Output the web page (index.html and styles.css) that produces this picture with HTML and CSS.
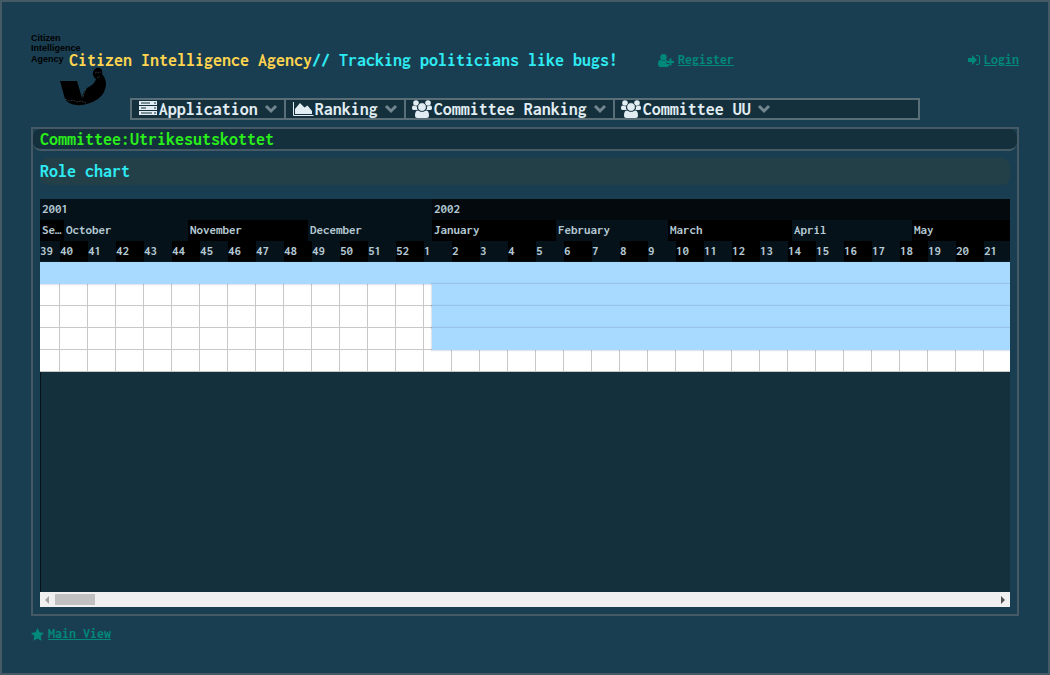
FILE: index.html
```html
<!DOCTYPE html>
<html lang="en">
<head>
<meta charset="utf-8">
<meta name="viewport" content="width=device-width, initial-scale=1">
<title>Citizen Intelligence Agency</title>
<link rel="stylesheet" href="styles.css">
</head>
<body class="page">
<svg class="sprite" aria-hidden="true">
  <symbol id="chevron" viewBox="0 0 14 10"><path d="M2 2l5 5 5-5" fill="none" stroke="currentColor" stroke-width="3"/></symbol>
  <symbol id="group" viewBox="0 0 20 18">
    <circle cx="4" cy="3" r="2.8"/><circle cx="16" cy="3" r="2.8"/>
    <path d="M0 8.5Q0 5.500 1.500 5.500L5 6.500Q4.500 9 6 10H2Q0 10 0 8.500zM20 8.500Q20 5.500 18.500 5.500L15 6.500Q15.500 9 14 10H18Q20 10 20 8.500z"/>
    <path d="M3 15.500Q3 10.500 6 10.500Q10 13 14 10.500Q17 10.500 17 15.500Q17 18 14.500 18H5.500Q3 18 3 15.500z"/>
    <circle cx="10" cy="7" r="4.300" stroke="#14303d" stroke-width=".7"/>
  </symbol>
</svg>
<header class="header">
  <svg class="logo" viewBox="0 0 80 75" role="img" aria-label="Citizen Intelligence Agency logo">
    <text x="0" y="8">Citizen</text><text x="0" y="18">Intelligence</text><text x="0" y="29">Agency</text>
    <path d="M29 48H46L51 65Q52 59 56 55Q64 51 65 46Q61 43 62 39Q64 34 69 35Q72 37 71 41Q75 45 75 52Q74 61 67 66Q56 73 45 72Q37 71 34 66z"/>
    <path d="M64 40l2-1 1 1 3-1M66 45l3-2M34 66l5 2 3-1 4 2 4-1 5 2M55 56l-2 4-1 5" fill="none" stroke="#4f575b" stroke-width=".6" stroke-dasharray="2 1"/>
  </svg>
  <h1 class="title"><span class="name">Citizen Intelligence Agency</span>// Tracking politicians like bugs!</h1>
  <a class="link" href="#register"><svg width="16" height="13" viewBox="0 0 16 13" aria-hidden="true"><circle cx="5.500" cy="3.200" r="3.200"/><path d="M0 10Q0 6 2.500 5.800Q5.500 8 8.500 5.800Q9.500 6 9.500 7.500H8.500V10H11V12Q10 13 9 13H2.500Q0 13 0 10z"/><path d="M9 8h7M12.500 4.500v7" stroke="currentColor" stroke-width="2"/></svg><span class="label">Register</span></a>
  <a class="link login" href="#login"><svg width="12" height="12" viewBox="0 0 12 12" aria-hidden="true"><path d="M0 4h4V1l5 5-5 5V8H0z"/><path d="M8 1.500h2Q11.500 1.500 11.500 3v6Q11.500 10.500 10 10.500H8" fill="none" stroke="currentColor"/></svg><span class="label">Login</span></a>
</header>
<nav class="menu" aria-label="Main">
  <button class="item" type="button"><svg class="icon" width="21" height="18" viewBox="0 0 21 18" aria-hidden="true"><path d="M1 1h18v4H1zM1 6h18v4H1zM1 11h18v4H1z"/><path d="M3 3h9M3 8h5M3 13h11" stroke="#14303d"/><path d="M16 3h2M16 8h2M16 13h2" stroke="#14303d"/></svg>Application<svg class="chevron" width="14" height="10"><use href="#chevron"/></svg></button>
  <button class="item" type="button"><svg class="icon" width="23" height="18" viewBox="0 0 23 18" aria-hidden="true"><path d="M1.500 2v13.500h20" fill="none" stroke="currentColor"/><path d="M3 14V9L8 3 12.500 7.500 15.500 5.500 20 11V14z"/></svg>Ranking<svg class="chevron" width="14" height="10"><use href="#chevron"/></svg></button>
  <button class="item" type="button"><svg class="icon group" width="20" height="18"><use href="#group"/></svg>Committee Ranking<svg class="chevron" width="14" height="10"><use href="#chevron"/></svg></button>
  <button class="item" type="button"><svg class="icon group" width="20" height="18"><use href="#group"/></svg>Committee UU<svg class="chevron" width="14" height="10"><use href="#chevron"/></svg></button>
</nav>
<main class="panel">
  <h2 class="caption">Committee:Utrikesutskottet</h2>
  <section class="content">
    <h3 class="subtitle">Role chart</h3>
    <div class="chart">
      <div class="scale years"><span style="--days:98">2001</span><span style="--days:365">2002</span></div>
      <div class="scale months"><span style="--days:6">Se…</span><span style="--days:31">October</span><span style="--days:30">November</span><span style="--days:31">December</span><span style="--days:31">January</span><span style="--days:28">February</span><span style="--days:31">March</span><span style="--days:30">April</span><span style="--days:31">May</span></div>
      <div class="scale weeks"><span style="--days:5">39</span><span>40</span><span>41</span><span>42</span><span>43</span><span>44</span><span>45</span><span>46</span><span>47</span><span>48</span><span>49</span><span>50</span><span>51</span><span>52</span><span>1</span><span>2</span><span>3</span><span>4</span><span>5</span><span>6</span><span>7</span><span>8</span><span>9</span><span>10</span><span>11</span><span>12</span><span>13</span><span>14</span><span>15</span><span>16</span><span>17</span><span>18</span><span>19</span><span>20</span><span>21</span></div>
      <div class="rows">
        <div class="row"><div class="bar"></div></div>
        <div class="row"><div class="bar" style="--start:98"></div></div>
        <div class="row"><div class="bar" style="--start:98"></div></div>
        <div class="row"><div class="bar" style="--start:98"></div></div>
        <div class="row"></div>
      </div>
      <div class="space"></div>
      <div class="scrollbar">
        <svg width="15" height="15" viewBox="0 0 15 15" aria-hidden="true"><path d="M9 4v8L5 8z" fill="#a3a3a3"/></svg>
        <div class="thumb"></div>
        <svg width="15" height="15" viewBox="0 0 15 15" aria-hidden="true"><path d="M6 4v8l4-4z" fill="#505050"/></svg>
      </div>
    </div>
  </section>
</main>
<footer class="footer">
  <a class="link" href="#main"><svg width="13" height="13" viewBox="0 0 13 13" aria-hidden="true"><path d="M6.500 0l2 4.300 4.500.6-3.300 3.200.8 4.700-4-2.300-4 2.300.8-4.700L0 4.900l4.500-.6z"/></svg><span class="label">Main View</span></a>
</footer>
</body>
</html>
```

FILE: styles.css
```css
* { box-sizing: border-box; }
.page {
  display: flex;
  flex-direction: column;
  min-height: 100vh;
  margin: 0;
  padding: 29px;
  border: 2px solid #455a64;
  background: #1a3e51;
  color: #e1edf2;
  font: bold 18px/20px Inconsolata, "Noto Sans Mono CJK SC", "Liberation Mono", monospace;
}
.sprite { position: absolute; width: 0; height: 0; }
.header {
  position: relative;
  display: flex;
  align-items: center;
  height: 58px;
  padding-left: 38px;
}
.logo {
  position: absolute;
  left: 0;
  top: 2px;
  width: 80px;
  height: 75px;
  font: bold 9px "Liberation Sans", sans-serif;
}
.title {
  position: relative;
  margin: 0 40px 0 0;
  font-size: 18px;
  font-weight: bold;
  color: #2eeaf2;
  white-space: nowrap;
}
.name { color: #ffd54f; }
.link {
  display: flex;
  align-items: center;
  gap: 4px;
  color: #00897b;
  font-size: 14px;
  line-height: 16px;
  text-decoration: none;
}
.link svg { fill: currentColor; }
.label { text-decoration: underline; }
.login { margin-left: auto; }
.menu {
  display: flex;
  width: 80%;
  margin: 9px auto 7px;
  border: 2px solid #5a6e78;
  background: #14303d;
}
.item {
  display: flex;
  align-items: center;
  height: 18px;
  padding: 0 6px;
  border: 0;
  border-right: 2px solid #5a6e78;
  background: none;
  color: inherit;
  font: inherit;
  line-height: 18px;
  white-space: nowrap;
}
.item:last-child { border-right: 0; }
.icon { flex: none; fill: currentColor; }
.group { margin-right: 2px; }
.chevron { margin-left: 6px; color: #72868f; }
.panel {
  display: flex;
  flex: 1;
  flex-direction: column;
  min-width: 0;
  border: 2px solid #455a64;
}
.caption {
  margin: 0;
  padding: 0 7px;
  border-bottom: 2px solid #455a64;
  border-radius: 8px;
  background: #14303d;
  color: #2aee1a;
  font-size: 18px;
  font-weight: bold;
  line-height: 20px;
}
.content { display: flex; flex: 1; flex-direction: column; padding: 7px; }
.subtitle {
  margin: 0 0 14px;
  border-radius: 8px;
  background: #234049;
  color: #2eeaf2;
  font-size: 18px;
  font-weight: bold;
  line-height: 27px;
}
.chart {
  display: flex;
  flex: 1;
  flex-direction: column;
  overflow: hidden;
  color: #b4c9d4;
  font-size: 13px;
  line-height: 20px;
}
.scale { display: flex; height: 21px; background: #061219; }
.scale span {
  flex: none;
  width: calc(var(--days, 7) * 4px);
  padding-left: 2px;
  overflow: hidden;
  white-space: nowrap;
}
.weeks span { padding-left: 0; }
.years span:nth-child(even) { background: #03090c; }
.months span:nth-child(odd), .weeks span:nth-child(even) { background: #000; }
.rows {
  background: repeating-linear-gradient(90deg, transparent 0 27px, #c8c8c8 27px 28px) -8px 0 / 2808px 100% #fff;
}
.row { height: 22px; border-bottom: 1px solid #c8c8c8; }
.bar {
  height: 22px;
  margin-left: calc(var(--start, 0) * 4px);
  background: #a8d9ff;
  box-shadow: 0 0 1px 1px rgba(60, 80, 130, .15);
}
.space { flex: 1; border-left: 1px solid #061219; background: #14303d; }
.scrollbar { display: flex; align-items: center; height: 15px; background: #f0f0f0; }
.thumb { width: 40px; height: 11px; margin-right: auto; background: #c1c1c1; }
.footer { display: flex; padding: 10px 0 2px; }
```
